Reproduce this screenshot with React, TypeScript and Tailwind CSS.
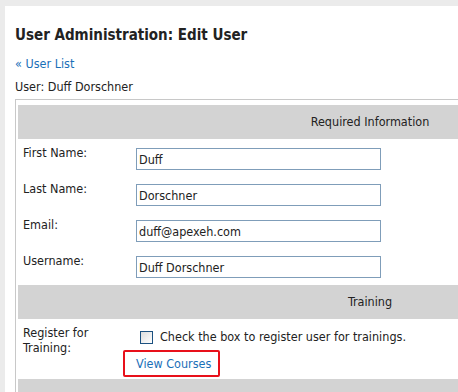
const fields = [
  { label: 'First Name:', value: 'Duff' },
  { label: 'Last Name:', value: 'Dorschner' },
  { label: 'Email:', value: 'duff@apexeh.com' },
  { label: 'Username:', value: 'Duff Dorschner' },
]

export default function App() {
  return (
    <div className="w-[458px] h-[392px] overflow-hidden bg-[#ebebeb] pt-[6px] pl-[5px] font-['DejaVu_Sans_Condensed','DejaVu_Sans',sans-serif] text-[12.5px] text-[#222]">
      <div className="bg-white h-full pl-[10px] pt-[19px]">
        <h1 className="text-[15px] leading-[20px] font-bold text-[#222]">User Administration: Edit User</h1>
        <a href="#" className="block mt-[11px] leading-[16px] text-[#1a6fb8]">« User List</a>
        <p className="mt-[7px] leading-[16px]">User: Duff Dorschner</p>

        <div className="mt-[4px] w-[710px] border border-[#c8c8c8] pt-[5px] px-[2px]">
          <div className="h-[34px] bg-[#d3d3d3] flex items-center justify-center">Required Information</div>

          {fields.map((f) => (
            <div key={f.label} className="h-[36px] flex pt-[6px]">
              <div className="w-[118px] pl-[5px] leading-[16px]">{f.label}</div>
              <input
                readOnly
                value={f.value}
                className="mt-[3px] w-[245px] h-[22px] border border-[#7f9db9] px-[2px] text-[12.5px] text-[#222] outline-none"
              />
            </div>
          ))}

          <div className="mt-[2px] h-[34px] bg-[#d3d3d3] flex items-center justify-center">Training</div>

          <div className="flex pt-[6px]">
            <div className="w-[118px] pl-[5px] leading-[15px]">Register for Training:</div>
            <div className="flex flex-col">
              <label className="flex items-center gap-[7px] leading-[16px] mt-[4px]">
                <span className="ml-[4px] w-[13px] h-[13px] border border-[#1c5180] bg-gradient-to-br from-[#dcdcdc] to-white" />
                Check the box to register user for trainings.
              </label>
              <div className="mt-[5px] -ml-[13px] w-[97px] h-[27px] border-2 border-[#e8101a] rounded-[2px] flex items-center pl-[11px]">
                <a href="#" className="text-[#1a6fb8] leading-[16px]">View Courses</a>
              </div>
            </div>
          </div>

          <div className="mt-[2px] h-[34px] bg-[#d3d3d3]" />
        </div>
      </div>
    </div>
  )
}
